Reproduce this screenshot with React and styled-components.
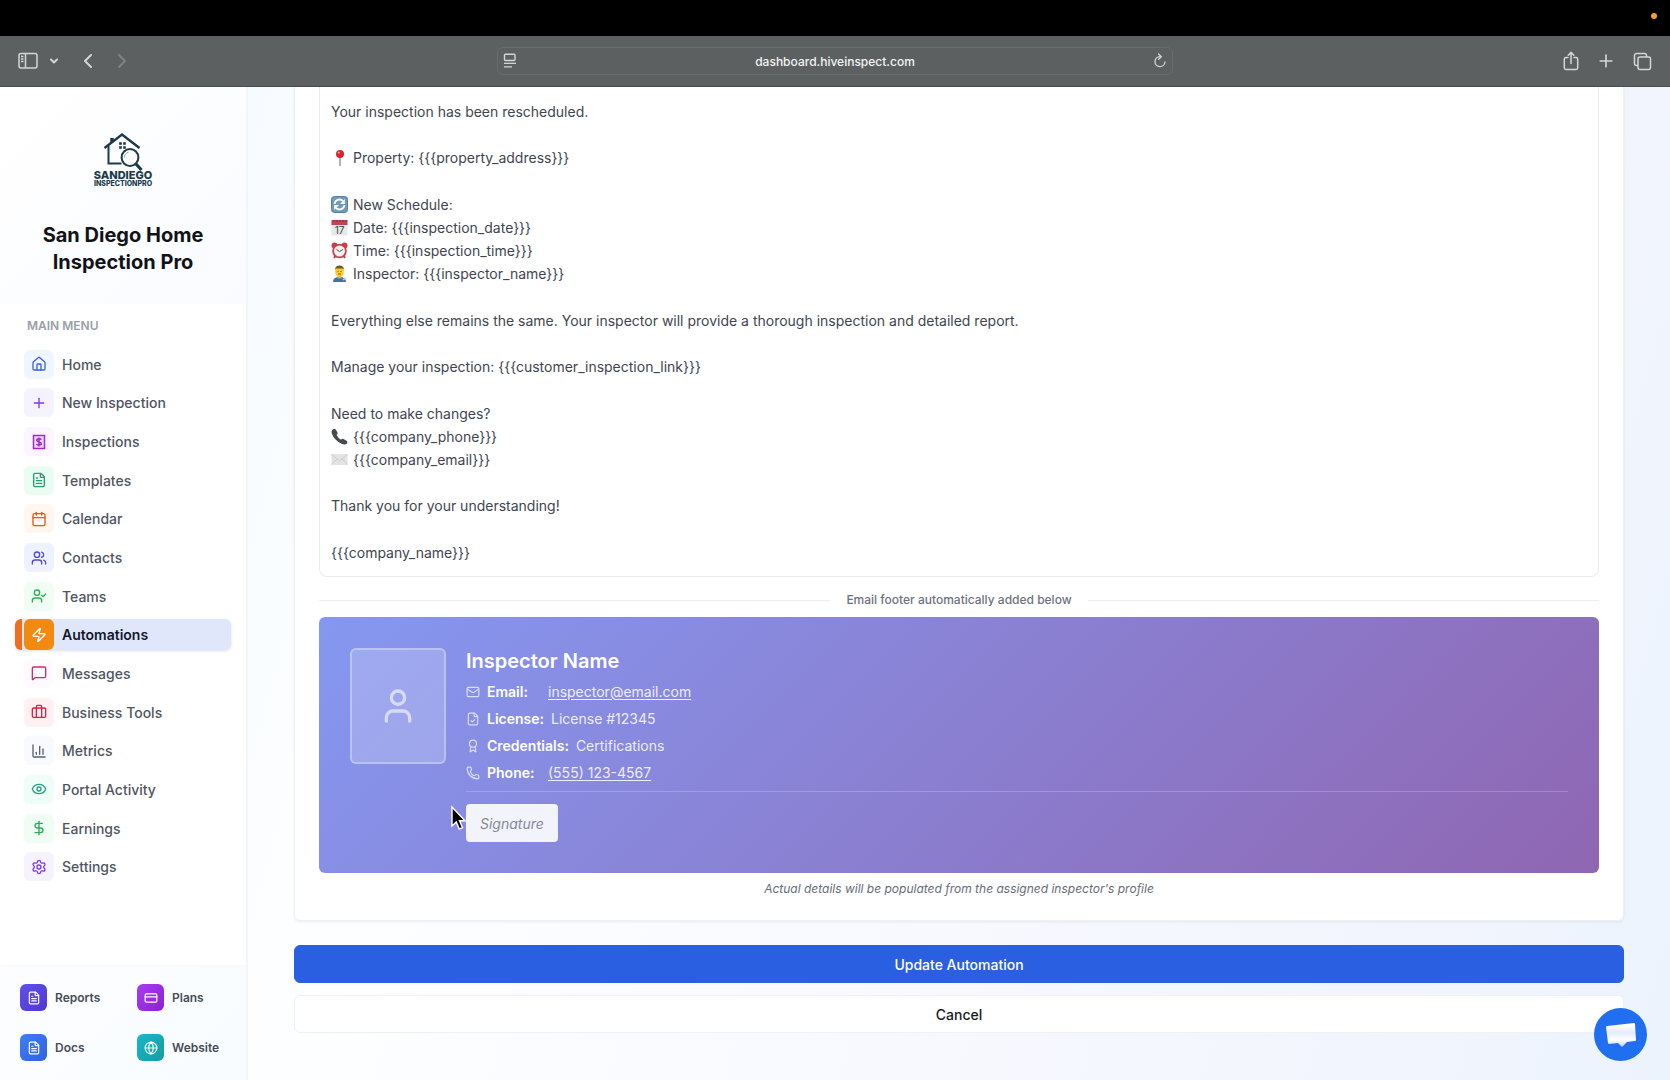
import React, { useState } from "react";
import styled, { createGlobalStyle } from "styled-components";
import {
  Award,
  Briefcase,
  Calendar,
  ChartColumn,
  ChevronDown,
  ChevronLeft,
  ChevronRight,
  CreditCard,
  DollarSign,
  Eye,
  FileCheck,
  FileText,
  Globe,
  House,
  Mail,
  MessageSquare,
  Phone,
  Plus,
  Settings,
  User,
  UserCheck,
  Users,
  Zap,
} from "lucide-react";

const GlobalStyle = createGlobalStyle`
  * {
    box-sizing: border-box;
  }
  body {
    margin: 0;
    font-family: Inter, "Liberation Sans", sans-serif;
    font-size: 14px;
    color: #3f4550;
    background: #fff;
  }
  button {
    font-family: inherit;
    cursor: pointer;
  }
  svg {
    display: block;
    flex-shrink: 0;
  }
`;

/* ---------- icons ---------- */

const SidebarIcon = () => (
  <svg width="20" height="18" viewBox="0 0 20 18" fill="none" stroke="currentColor" strokeWidth="1.5">
    <rect x="1" y="1.5" width="18" height="14.5" rx="2" />
    <path d="M7.5 1.5V16M3 4.5h2.5M3 7h2.5M3 9.5h2.5" />
  </svg>
);

const ReaderIcon = () => (
  <svg width="14" height="16" viewBox="0 0 14 16" fill="none" stroke="currentColor" strokeWidth="1.4">
    <rect x="1.5" y="1.2" width="10.5" height="6.3" rx="1" />
    <path d="M1 10.4h12M1 13.9h8" />
  </svg>
);

const ReloadIcon = () => (
  <svg width="14" height="16" viewBox="0 0 14 16" fill="none" stroke="currentColor" strokeWidth="1.3" strokeLinecap="round">
    <path d="M7 3.6a5 5 0 1 0 5 5.4" />
    <path d="M5.6 1l2.7 2.7-2.7 2.6" />
  </svg>
);

const ShareIcon = () => (
  <svg width="16" height="20" viewBox="0 0 16 20" fill="none" stroke="currentColor" strokeWidth="1.5" strokeLinecap="round" strokeLinejoin="round">
    <path d="M5 6.5H3A1.7 1.7 0 0 0 1.3 8.2v8.6A1.7 1.7 0 0 0 3 18.5h10a1.7 1.7 0 0 0 1.7-1.7V8.2A1.7 1.7 0 0 0 13 6.5h-2" />
    <path d="M8 12.5v-11M5.2 4.2 8 1.4l2.8 2.8" />
  </svg>
);

const TabsIcon = () => (
  <svg width="19" height="19" viewBox="0 0 19 19" fill="none" stroke="currentColor" strokeWidth="1.5">
    <rect x="5" y="5" width="12.5" height="12.5" rx="2" />
    <path d="M5 13.5H3.5a2 2 0 0 1-2-2v-8a2 2 0 0 1 2-2h8a2 2 0 0 1 2 2V5" />
  </svg>
);

const InvoiceIcon = () => (
  <svg width="14" height="16" viewBox="0 0 14 16" fill="none" stroke="currentColor" strokeWidth="1.5">
    <path d="M1.5 1.5h11v13h-11z" fill="currentColor" fillOpacity="0.12" />
    <path d="M9.3 5.8C9 5 8.200 4.800 7 4.800c-1.300 0-2.200.5-2.200 1.500 0 2.200 4.500 1.100 4.500 3.300 0 1-.9 1.500-2.300 1.500-1.200 0-2.100-.3-2.400-1.100M7 3.500v9" />
  </svg>
);

const LogoMark = () => (
  <svg width="62" height="58" viewBox="0 0 62 58" fill="none" stroke="#1b3a4b" role="img" aria-label="San Diego InspectionPro">
    <path d="M12.500 16 30 2.500 47.500 16" strokeWidth="2.400" />
    <path d="M20 10V6" strokeWidth="3.500" />
    <path d="M16.500 14v17.500h13" strokeWidth="2" />
    <path d="M27.500 10.500h2v2h-2zM31.500 10.500h2v2h-2zM27.500 14.500h2v2h-2zM31.500 14.500h2v2h-2z" fill="#1b3a4b" strokeWidth="0.600" />
    <circle cx="38" cy="25.500" r="8.400" fill="#fff" strokeWidth="2" />
    <path d="M32.500 25.500a5.500 5.500 0 0 1 4-5.300" stroke="#8ba0aa" strokeWidth="1" />
    <path d="m44 32 5.500 6" strokeWidth="3.200" />
    <text x="31" y="47" textAnchor="middle" fontSize="11" fontWeight="800" fill="#1b3a4b" stroke="none">
      SANDIEGO
    </text>
    <text x="31" y="54" textAnchor="middle" fontSize="7" fontWeight="800" fill="#1b3a4b" stroke="none">
      INSPECTIONPRO
    </text>
  </svg>
);

const ChatIcon = () => (
  <svg width="32" height="28" viewBox="0 0 32 28">
    <defs>
      <linearGradient id="chat" x1="0" y1="0" x2="0" y2="1">
        <stop offset="0.1" stopColor="#fff" />
        <stop offset="0.4" stopColor="#e3ebfd" />
        <stop offset="0.7" stopColor="#fff" />
        <stop offset="1" stopColor="#b9d0fb" />
      </linearGradient>
    </defs>
    <path d="M2 5 29 2q1 0 1 1l1 16q0 1-1 1l-8 1-5 5-4-4-9 1q-1 0-1-1L1 6q0-1 1-1z" fill="url(#chat)" />
  </svg>
);

const emojis = {
  pin: (
    <>
      <path d="M9 8v9" stroke="#8d949b" strokeWidth="1.4" />
      <circle cx="9" cy="5" r="4" fill="#d8202f" />
      <circle cx="7.8" cy="3.6" r="1.2" fill="#f58b90" />
    </>
  ),
  refresh: (
    <>
      <rect x="0.5" y="0.5" width="16" height="16" rx="3" fill="#6f9abb" stroke="#587f9f" />
      <path d="M3.5 8A5 5 0 0 1 12 5M13.5 9A5 5 0 0 1 5 12" fill="none" stroke="#fff" strokeWidth="1.8" />
      <path d="M13.8 3v5H9zM3.2 14V9H8z" fill="#fff" />
    </>
  ),
  calendar: (
    <>
      <rect x="0.5" y="1" width="16" height="15.5" rx="1" fill="#e8e8e6" />
      <path d="M0.500 1h16v5h-16z" fill="#c04554" />
      <path d="M3 1v2M6 1v2M9 1v2M12 1v2M15 1v2" stroke="#7d3540" />
      <text x="8.5" y="15" fontSize="10" textAnchor="middle" fill="#3c4146">
        17
      </text>
    </>
  ),
  clock: (
    <>
      <path d="m3 16 2-3M14 16l-2-3" stroke="#b23a44" strokeWidth="2" />
      <circle cx="3.5" cy="3.5" r="3" fill="#c63e4a" />
      <circle cx="13.5" cy="3.5" r="3" fill="#c63e4a" />
      <circle cx="8.5" cy="9" r="6.4" fill="#f5f0ea" stroke="#c24450" strokeWidth="1.8" />
      <path d="m5.5 7.500 3 2 3.500-2" fill="none" stroke="#555" />
    </>
  ),
  worker: (
    <>
      <path d="M2 17q0-5 6.500-5t6.500 5z" fill="#3f6fb0" />
      <path d="M6.500 10h4v3.500h-4z" fill="#e5ae22" />
      <path d="M4.300 5q0-4 4.200-4t4.200 4v2.500q0 4-4.200 4t-4.200-4z" fill="#fbca2d" />
      <path d="M4 5q0-4.500 4.500-4.500T13 5l-1-1.500H5z" fill="#77552a" />
      <path d="M6.500 6.500h1M9.500 6.500h1M7 9h3" stroke="#6c4a12" strokeWidth="0.8" />
      <path d="m12 15 3-2.500" stroke="#d0d5dc" strokeWidth="1.5" />
    </>
  ),
  phone: (
    <path
      d="M1 2.500Q3-.5 5 2l1.500 2.500Q7 6 5.500 7q1.500 3 4.500 4.800 1.200-1.500 2.500-.8l3 1.800q1.500 1.200.5 2.700-2 2-5.500.3Q3 12 .8 5.500.3 3.700 1 2.500z"
      fill="#454a4e"
    />
  ),
  mail: (
    <>
      <rect x="0.5" y="3" width="16" height="11" fill="#e2e3e2" />
      <path d="m.5 3.500 8 6.500 8-6.500M.5 13.500 6 8M16.500 13.500 11 8" fill="none" stroke="#c7c9c9" strokeWidth="0.8" />
    </>
  ),
};

const Emoji = ({ name }) => (
  <svg width="17" height="17" viewBox="0 0 17 17" aria-hidden="true">
    {emojis[name]}
  </svg>
);

/* ---------- data ---------- */

const menu = [
  { label: "Home", icon: House, color: "#3b62d8", bg: "#eff6ff" },
  { label: "New Inspection", icon: Plus, color: "#7c3aed", bg: "#f5f3ff" },
  { label: "Inspections", icon: InvoiceIcon, color: "#a726d3", bg: "#fcf4ff" },
  { label: "Templates", icon: FileText, color: "#27a070", bg: "#e9fdf3" },
  { label: "Calendar", icon: Calendar, color: "#ea580c", bg: "#fff7ef" },
  { label: "Contacts", icon: Users, color: "#5646dc", bg: "#eef1ff" },
  { label: "Teams", icon: UserCheck, color: "#2fae5b", bg: "#f0fdf4" },
  { label: "Automations", icon: Zap, color: "#fff", bg: "#f28a12" },
  { label: "Messages", icon: MessageSquare, color: "#cf2878", bg: "#fffafd" },
  { label: "Business Tools", icon: Briefcase, color: "#dc1f48", bg: "#fff0f2" },
  { label: "Metrics", icon: ChartColumn, color: "#56607a", bg: "#f9fafd" },
  { label: "Portal Activity", icon: Eye, color: "#2a9d80", bg: "#effdf8" },
  { label: "Earnings", icon: DollarSign, color: "#2fa95a", bg: "#f0fdf4" },
  { label: "Settings", icon: Settings, color: "#7c3aed", bg: "#f6f3ff" },
];

const shortcuts = [
  { label: "Reports", icon: FileText, from: "#6050ea", to: "#5038d0" },
  { label: "Plans", icon: CreditCard, from: "#a83cf2", to: "#8a22d4" },
  { label: "Docs", icon: FileText, from: "#3f80f3", to: "#2d62e4" },
  { label: "Website", icon: Globe, from: "#18b8c6", to: "#169ca0" },
];

const lines = [
  { text: "Your inspection has been rescheduled." },
  {},
  { emoji: "pin", text: "Property: {{{property_address}}}" },
  {},
  { emoji: "refresh", text: "New Schedule:" },
  { emoji: "calendar", text: "Date: {{{inspection_date}}}" },
  { emoji: "clock", text: "Time: {{{inspection_time}}}" },
  { emoji: "worker", text: "Inspector: {{{inspector_name}}}" },
  {},
  {
    text: "Everything else remains the same. Your inspector will provide a thorough inspection and detailed report.",
  },
  {},
  { text: "Manage your inspection: {{{customer_inspection_link}}}" },
  {},
  { text: "Need to make changes?" },
  { emoji: "phone", text: "{{{company_phone}}}" },
  { emoji: "mail", text: "{{{company_email}}}" },
  {},
  { text: "Thank you for your understanding!" },
  {},
  { text: "{{{company_name}}}" },
];

const details = [
  { icon: Mail, label: "Email:", value: "inspector@email.com", href: "mailto:inspector@email.com" },
  { icon: FileCheck, label: "License:", value: "License #12345" },
  { icon: Award, label: "Credentials:", value: "Certifications" },
  { icon: Phone, label: "Phone:", value: "(555) 123-4567", href: "tel:5551234567" },
];

/* ---------- app ---------- */

const Browser = () => (
  <>
    <MenuBar>
      <RecordingDot />
    </MenuBar>
    <Toolbar>
      <ToolGroup>
        <ToolButton aria-label="Sidebar">
          <SidebarIcon />
        </ToolButton>
        <ToolButton aria-label="Tab groups">
          <ChevronDown size={12} strokeWidth={4} />
        </ToolButton>
        <NavButtons>
          <ToolButton aria-label="Back">
            <ChevronLeft size={24} strokeWidth={2} />
          </ToolButton>
          <ToolButton aria-label="Forward" $dim>
            <ChevronRight size={24} strokeWidth={2} />
          </ToolButton>
        </NavButtons>
      </ToolGroup>
      <AddressBar>
        <ReaderIcon />
        <Address aria-label="Address" defaultValue="dashboard.hiveinspect.com" />
        <ToolButton aria-label="Reload">
          <ReloadIcon />
        </ToolButton>
      </AddressBar>
      <ToolGroup $end>
        <ToolButton aria-label="Share">
          <ShareIcon />
        </ToolButton>
        <ToolButton aria-label="New tab">
          <Plus size={20} strokeWidth={2} />
        </ToolButton>
        <ToolButton aria-label="Show tabs">
          <TabsIcon />
        </ToolButton>
      </ToolGroup>
    </Toolbar>
  </>
);

const Sidebar = ({ active, onSelect }) => (
  <Side>
    <Brand>
      <LogoMark />
      <h1>San Diego Home Inspection Pro</h1>
    </Brand>
    <MenuTitle>MAIN MENU</MenuTitle>
    <Menu>
      {menu.map(({ label, icon: Icon, color, bg }) => (
        <MenuItem
          key={label}
          href="#"
          $active={label === active}
          onClick={(e) => {
            e.preventDefault();
            onSelect(label);
          }}
        >
          <MenuTile $color={color} $bg={bg} $active={label === active}>
            <Icon size={16} />
          </MenuTile>
          {label}
        </MenuItem>
      ))}
    </Menu>
    <Shortcuts>
      {shortcuts.map(({ label, icon: Icon, from, to }) => (
        <Shortcut key={label} href="#">
          <ShortcutTile $from={from} $to={to}>
            <Icon size={14} strokeWidth={2} />
          </ShortcutTile>
          {label}
        </Shortcut>
      ))}
    </Shortcuts>
  </Side>
);

const EmailFooter = () => (
  <FooterCard>
    <Photo>
      <User size={40} />
      <Cursor width="17" height="26" viewBox="0 0 17 26">
        <path d="M2 2v19l4.300-4 3 7 3.200-1.400-3-6.800H15z" fill="#000" stroke="#fff" strokeWidth="1.4" />
      </Cursor>
    </Photo>
    <FooterInfo>
      <h2>Inspector Name</h2>
      <DetailList>
        {details.map(({ icon: Icon, label, value, href }) => (
          <Detail key={label}>
            <Icon size={14} strokeWidth={2} />
            <dt>{label}</dt>
            <dd>{href ? <a href={href}>{value}</a> : value}</dd>
          </Detail>
        ))}
      </DetailList>
      <SignatureRow>
        <Signature>Signature</Signature>
      </SignatureRow>
    </FooterInfo>
  </FooterCard>
);

const App = () => {
  const [active, setActive] = useState("Automations");

  return (
    <Page>
      <GlobalStyle />
      <Browser />
      <Layout>
        <Sidebar active={active} onSelect={setActive} />
        <Main>
          <Card>
            <Editor role="textbox" aria-multiline="true" aria-label="Email body" contentEditable suppressContentEditableWarning>
              {lines.map(({ emoji, text }, i) => (
                <Line key={i}>
                  {emoji && <Emoji name={emoji} />}
                  {text}
                </Line>
              ))}
            </Editor>
            <Divider>Email footer automatically added below</Divider>
            <EmailFooter />
            <Caption>Actual details will be populated from the assigned inspector's profile</Caption>
          </Card>
          <Actions>
            <Button $primary>Update Automation</Button>
            <Button>Cancel</Button>
          </Actions>
        </Main>
      </Layout>
      <ChatButton aria-label="Open chat">
        <ChatIcon />
      </ChatButton>
    </Page>
  );
};

/* ---------- styles ---------- */

const Page = styled.div`
  display: flex;
  flex-direction: column;
  min-height: 100vh;
`;

const MenuBar = styled.div`
  display: flex;
  align-items: center;
  justify-content: flex-end;
  height: 36px;
  padding: 0 13px 5px;
  background: #000;
`;

const RecordingDot = styled.span`
  width: 6px;
  height: 6px;
  border-radius: 50%;
  background: #f0a030;
`;

const Toolbar = styled.header`
  display: grid;
  grid-template-columns: 1fr minmax(300px, 676px) 1fr;
  align-items: center;
  height: 51px;
  padding: 0 18px;
  background: #5c6061;
  border-bottom: 1px solid #484b4b;
`;

const ToolGroup = styled.div`
  display: flex;
  align-items: center;
  gap: ${(props) => (props.$end ? "17px" : "10px")};
  justify-content: ${(props) => (props.$end ? "flex-end" : "flex-start")};
`;

const NavButtons = styled.div`
  display: flex;
  gap: 10px;
  margin-left: 6px;
`;

const ToolButton = styled.button`
  display: flex;
  padding: 0;
  border: 0;
  background: none;
  color: ${(props) => (props.$dim ? "#7d8182" : "#d4d6d6")};
`;

const AddressBar = styled.div`
  display: flex;
  align-items: center;
  height: 28px;
  padding: 0 5px;
  border: 1px solid #686c6d;
  border-radius: 6px;
  color: #d4d6d6;
`;

const Address = styled.input`
  flex: 1;
  min-width: 0;
  border: 0;
  background: none;
  color: #f4f4f4;
  font: 500 12px Inter, sans-serif;
  text-align: center;
  outline: none;
`;

const Layout = styled.div`
  display: flex;
  flex: 1;
`;

const Side = styled.aside`
  display: flex;
  flex-direction: column;
  width: 248px;
  flex-shrink: 0;
  border-right: 2px solid #f3f5f8;
  background: #fff;
`;

const Brand = styled.div`
  display: flex;
  flex-direction: column;
  align-items: center;
  gap: 32px;
  padding: 45px 40px 28px;
  background: linear-gradient(135deg, #fff, #fafbff);

  h1 {
    margin: 0;
    font-size: 20px;
    font-weight: 700;
    line-height: 27px;
    text-align: center;
    color: #111318;
  }
`;

const MenuTitle = styled.div`
  padding: 14px 27px 11px;
  font-size: 12px;
  font-weight: 600;
  line-height: 16px;
  color: #9a9ea6;
`;

const Menu = styled.nav`
  display: grid;
  grid-auto-rows: 1fr;
  align-items: center;
  min-height: 541px;
  padding: 0 15px;
`;

const MenuItem = styled.a`
  display: flex;
  align-items: center;
  gap: 8px;
  height: 31px;
  padding-left: 2px;
  border-left: 7px solid ${(props) => (props.$active ? "#ee6f1e" : "transparent")};
  border-radius: 6px;
  background: ${(props) => (props.$active ? "#e0e7fb" : "none")};
  box-shadow: ${(props) => (props.$active ? "0 1px 3px rgba(30, 40, 80, 0.15)" : "none")};
  color: ${(props) => (props.$active ? "#12172b" : "#50555f")};
  font-weight: ${(props) => (props.$active ? 600 : 500)};
  text-decoration: none;
`;

const MenuTile = styled.span`
  display: flex;
  align-items: center;
  justify-content: center;
  width: 30px;
  height: ${(props) => (props.$active ? "31px" : "29px")};
  border-radius: 6px;
  color: ${(props) => props.$color};
  background: ${(props) => props.$bg};
`;

const Shortcuts = styled.div`
  display: grid;
  grid-template-columns: 1fr 1fr;
  gap: 23px 12px;
  margin-top: auto;
  padding: 18px 20px 19px;
  border-top: 1px solid #f7f9fb;
  background: linear-gradient(135deg, #fdfdff, #f7fcff);
`;

const Shortcut = styled.a`
  display: flex;
  align-items: center;
  gap: 8px;
  font-size: 12px;
  font-weight: 600;
  color: #474c57;
  text-decoration: none;

  &:nth-child(even) {
    padding-left: 8px;
  }
`;

const ShortcutTile = styled.span`
  display: flex;
  align-items: center;
  justify-content: center;
  width: 27px;
  height: 27px;
  border-radius: 6px;
  color: #fff;
  background: linear-gradient(135deg, ${(props) => props.$from}, ${(props) => props.$to});
`;

const Main = styled.main`
  flex: 1;
  min-width: 0;
  padding: 0 46px;
  background: linear-gradient(105deg, #f6fbff 0%, #fdfeff 18%, #f3f5fe 80%, #ebf3fc 100%);
`;

const Card = styled.section`
  padding: 0 24px 23px;
  border: 1px solid #eef1f4;
  border-top: 0;
  border-radius: 0 0 6px 6px;
  background: #fff;
  box-shadow: 0 1px 3px rgba(40, 50, 80, 0.08);
`;

const Editor = styled.div`
  display: grid;
  grid-auto-rows: 1fr;
  min-height: 490px;
  padding: 13px 11px 12px;
  border: 1px solid #e9ecef;
  border-top: 0;
  border-radius: 0 0 8px 8px;
  outline: none;
`;

const Line = styled.div`
  display: flex;
  align-items: center;
  gap: 5px;
  min-height: 23px;
`;

const Divider = styled.div`
  display: flex;
  align-items: center;
  gap: 16px;
  padding: 15px 0 9px;
  font-size: 12px;
  font-weight: 500;
  line-height: 16px;
  color: #6d7280;

  &::before,
  &::after {
    content: "";
    flex: 1;
    height: 1px;
    background: #eceef1;
  }
`;

const FooterCard = styled.div`
  display: flex;
  align-items: flex-start;
  gap: 20px;
  padding: 31px;
  border-radius: 6px;
  color: #fff;
  background: linear-gradient(135deg, #8597f0 0%, #8a80d2 48%, #8f66b2 100%);
`;

const Photo = styled.div`
  position: relative;
  display: flex;
  align-items: center;
  justify-content: center;
  width: 96px;
  height: 116px;
  flex-shrink: 0;
  border: 2px solid rgba(255, 255, 255, 0.3);
  border-radius: 6px;
  background: rgba(255, 255, 255, 0.2);

  > svg:first-child {
    opacity: 0.6;
  }
`;

const Cursor = styled.svg`
  position: absolute;
  top: 155px;
  left: 98px;
  z-index: 2;
`;

const FooterInfo = styled.div`
  flex: 1;

  h2 {
    margin: 0 0 8px;
    font-size: 20px;
    font-weight: 600;
    line-height: 26px;
  }
`;

const DetailList = styled.dl`
  display: grid;
  gap: 8px;
  margin: 0;
`;

const Detail = styled.div`
  display: flex;
  align-items: center;
  gap: 7px;
  line-height: 19px;

  svg {
    opacity: 0.7;
  }
  dt {
    min-width: 54px;
    font-weight: 600;
  }
  dd {
    margin: 0;
    opacity: 0.85;
  }
  a {
    color: inherit;
    text-underline-offset: 2px;
  }
`;

const SignatureRow = styled.div`
  margin-top: 9px;
  padding-top: 12px;
  border-top: 1px solid rgba(255, 255, 255, 0.2);
`;

const Signature = styled.span`
  display: inline-flex;
  align-items: center;
  height: 38px;
  padding: 0 14px;
  border-radius: 4px;
  background: #f3f3fc;
  color: #858998;
  font-style: italic;
  vertical-align: top;
`;

const Caption = styled.p`
  margin: 8px 0 0;
  font-size: 12px;
  font-style: italic;
  line-height: 16px;
  text-align: center;
  color: #666b78;
`;

const Actions = styled.div`
  display: grid;
  gap: 12px;
  padding: 24px 0;
`;

const Button = styled.button`
  height: 38px;
  border: 1px solid ${(props) => (props.$primary ? "#2a5fe2" : "#eff1f5")};
  border-radius: 6px;
  background: ${(props) => (props.$primary ? "#2a5fe2" : "#fff")};
  color: ${(props) => (props.$primary ? "#fff" : "#15181f")};
  font-size: 14px;
  font-weight: 500;
`;

const ChatButton = styled.button`
  position: fixed;
  right: 23px;
  bottom: 19px;
  display: flex;
  align-items: center;
  justify-content: center;
  width: 53px;
  height: 53px;
  padding: 0;
  border: 0;
  border-radius: 50%;
  background: #1f6ff0;
`;

export default App;
